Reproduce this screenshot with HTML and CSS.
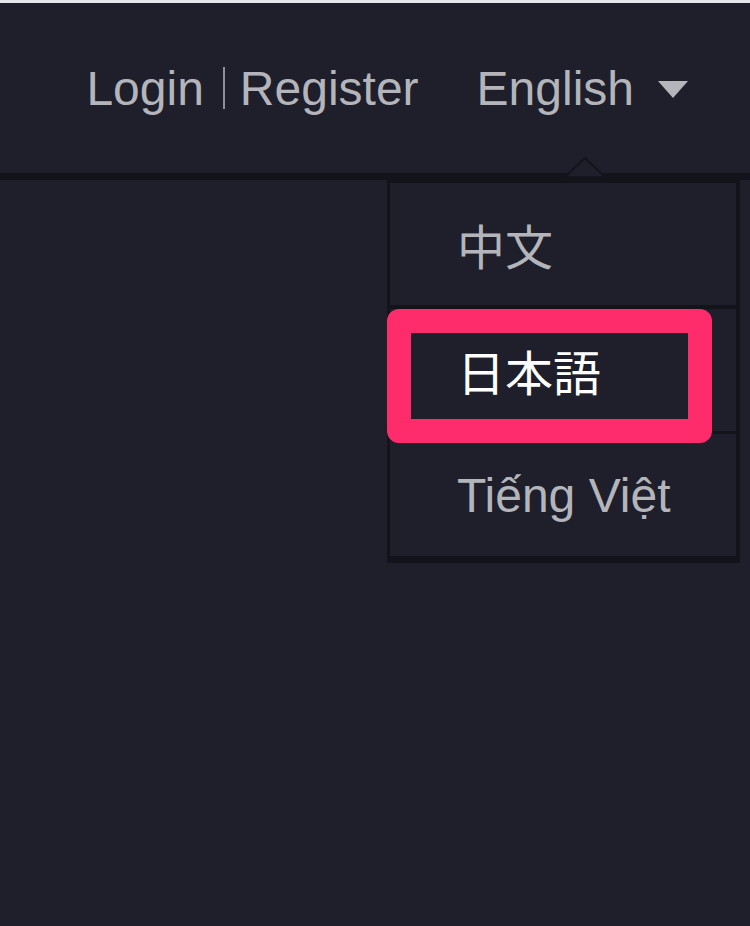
FILE: index.html
```html
<!DOCTYPE html>
<html lang="en">
<head>
<meta charset="utf-8">
<title>Language menu</title>
<link rel="stylesheet" href="styles.css">
</head>
<body>
  <div class="topstrip"></div>
  <header class="header">
    <nav class="auth">
      <a class="link">Login</a>
      <span class="sep"></span>
      <a class="link">Register</a>
    </nav>
    <div class="lang">
      <span class="lang-label">English</span>
      <svg class="caret" width="30" height="17" viewBox="0 0 30 17"><polygon points="0,0 30,0 15,17" fill="#b5b6bc"/></svg>
    </div>
  </header>
  <div class="menu">
    <svg class="menu-arrow" width="44" height="22" viewBox="0 0 44 22"><polygon points="2,21 22,2 42,21" fill="#1e1f2b" stroke="#13141c" stroke-width="2"/></svg>
    <ul class="menu-list">
      <li class="menu-item sep4">中文</li>
      <li class="menu-item active sep3" lang="ja">日本語</li>
      <li class="menu-item" lang="vi">Tiếng Việt</li>
    </ul>
    <div class="highlight"></div>
  </div>
</body>
</html>
```

FILE: styles.css
```css
html, body {
  margin: 0;
  padding: 0;
  background: #1e1f2b;
  width: 750px;
  height: 926px;
  overflow: hidden;
  font-family: "Liberation Sans", "Noto Sans CJK JP", "Noto Sans CJK SC", sans-serif;
}

.topstrip {
  height: 3px;
  background: #e6e6e8;
}

.header {
  height: 170px;
  border-bottom: 7px solid #12131b;
  display: flex;
  align-items: center;
  justify-content: flex-end;
  padding-right: 62px;
  color: #b4b5bb;
  font-size: 48px;
}

.auth {
  display: flex;
  align-items: center;
}

.link {
  color: #b4b5bb;
  text-decoration: none;
}

.sep {
  width: 2px;
  height: 42px;
  background: #8e8f97;
  margin: 0 15px 0 19px;
}

.lang {
  display: flex;
  align-items: center;
  margin-left: 58px;
}

.caret {
  margin-left: 24px;
  display: block;
  margin-top: 2px;
}

.menu {
  position: absolute;
  left: 387px;
  top: 180px;
  width: 346px;
  border-style: solid;
  border-color: #12131b;
  border-width: 3px 4px 7px 3px;
  background: #1e1f2b;
}

.menu-arrow {
  position: absolute;
  left: 173px;
  top: -27px;
  display: block;
}

.menu-list {
  list-style: none;
  margin: 0;
  padding: 0;
}

.menu-item {
  height: 122px;
  display: flex;
  align-items: center;
  padding-left: 67px;
  font-size: 48px;
  color: #b4b5bb;
}

.menu-item.sep4 {
  border-bottom: 4px solid #12131b;
}

.menu-item.sep3 {
  border-bottom: 3px solid #12131b;
}

.menu-item.active {
  color: #ffffff;
}

.highlight {
  position: absolute;
  left: -3px;
  top: 126px;
  width: 277px;
  height: 86px;
  border: 24px solid #fe2c6b;
  border-radius: 12px;
}
```
